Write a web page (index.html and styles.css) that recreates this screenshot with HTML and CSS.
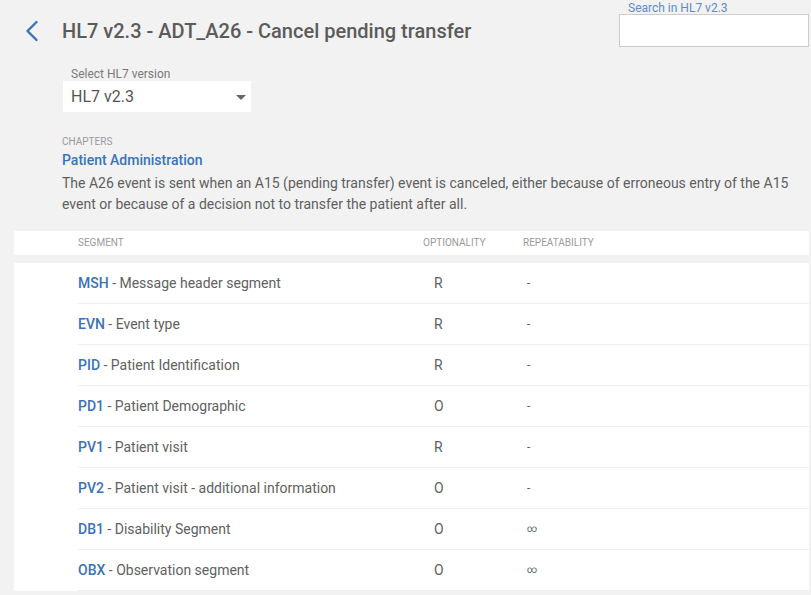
FILE: index.html
```html
<!DOCTYPE html>
<html lang="en">
<head>
<meta charset="utf-8">
<title>HL7 v2.3 - ADT_A26</title>
<link rel="stylesheet" href="styles.css">
</head>
<body>
<header class="header">
  <div class="title-group">
    <a class="back" href="#" aria-label="Back">
      <svg width="14" height="22" viewBox="0 0 14 22"><path d="M11.5 2 L2.5 11 L11.5 20" fill="none" stroke="#3b72b8" stroke-width="2.4" stroke-linecap="round" stroke-linejoin="round"/></svg>
    </a>
    <h1 class="title">HL7 v2.3 - ADT_A26 - Cancel pending transfer</h1>
  </div>
  <div class="search">
    <label class="search-label">Search in HL7 v2.3</label>
    <div class="search-input"></div>
  </div>
</header>

<section class="version">
  <div class="version-label">Select HL7 version</div>
  <div class="select">
    <span class="select-value">HL7 v2.3</span>
    <span class="caret"></span>
  </div>
</section>

<section class="chapter">
  <div class="chapter-kicker">CHAPTERS</div>
  <div class="chapter-name">Patient Administration</div>
  <p class="chapter-desc">The A26 event is sent when an A15 (pending transfer) event is canceled, either because of erroneous entry of the A15 event or because of a decision not to transfer the patient after all.</p>
</section>

<div class="thead">
  <div class="th">SEGMENT</div>
  <div class="th">OPTIONALITY</div>
  <div class="th">REPEATABILITY</div>
</div>

<div class="tbody">
  <div class="row"><div class="seg"><span class="code">MSH</span> - Message header segment</div><div class="opt">R</div><div class="rep">-</div></div>
  <div class="row"><div class="seg"><span class="code">EVN</span> - Event type</div><div class="opt">R</div><div class="rep">-</div></div>
  <div class="row"><div class="seg"><span class="code">PID</span> - Patient Identification</div><div class="opt">R</div><div class="rep">-</div></div>
  <div class="row"><div class="seg"><span class="code">PD1</span> - Patient Demographic</div><div class="opt">O</div><div class="rep">-</div></div>
  <div class="row"><div class="seg"><span class="code">PV1</span> - Patient visit</div><div class="opt">R</div><div class="rep">-</div></div>
  <div class="row"><div class="seg"><span class="code">PV2</span> - Patient visit - additional information</div><div class="opt">O</div><div class="rep">-</div></div>
  <div class="row"><div class="seg"><span class="code">DB1</span> - Disability Segment</div><div class="opt">O</div><div class="rep inf">∞</div></div>
  <div class="row"><div class="seg"><span class="code">OBX</span> - Observation segment</div><div class="opt">O</div><div class="rep inf">∞</div></div>
</div>
</body>
</html>
```

FILE: styles.css
```css
* { box-sizing: border-box; }

html, body {
  margin: 0;
  padding: 0;
  background: #f2f2f2;
  font-family: Roboto, "Liberation Sans", Arial, sans-serif;
  color: #616161;
  overflow: hidden;
}

.header {
  display: flex;
  justify-content: space-between;
  align-items: flex-start;
  padding: 0 2px 0 26px;
}

.title-group {
  display: flex;
  align-items: center;
  margin-top: 19px;
}

.back {
  display: flex;
  width: 14px;
  height: 22px;
  margin-left: -1px;
}

.title {
  margin: 0 0 0 23px;
  font-size: 20px;
  line-height: 24px;
  font-weight: 500;
  color: #5b5b5b;
}

.search {
  width: 190px;
  padding-top: 2px;
}

.search-label {
  display: block;
  padding-left: 9px;
  font-size: 12px;
  line-height: 12px;
  color: #5f8cc6;
}

.search-input {
  height: 33px;
  background: #fff;
  border: 1px solid #cccccc;
}

.version {
  margin: 21px 0 0 63px;
  width: 188px;
}

.version-label {
  padding-left: 8px;
  font-size: 12px;
  line-height: 13px;
  color: #7a7a7a;
}

.select {
  margin-top: 0;
  height: 31px;
  background: #fff;
  display: flex;
  align-items: center;
  justify-content: space-between;
  padding: 0 5px 0 8px;
}

.select-value {
  font-size: 16px;
  line-height: 31px;
  color: #555;
}

.caret {
  width: 0;
  height: 0;
  border-left: 5px solid transparent;
  border-right: 5px solid transparent;
  border-top: 5px solid #666;
  margin-top: 1px;
}

.chapter {
  margin: 24px 2px 0 62px;
}

.chapter-kicker {
  font-size: 10px;
  line-height: 12px;
  color: #9a9a9a;
}

.chapter-name {
  margin-top: 2px;
  font-size: 14px;
  line-height: 21px;
  font-weight: 500;
  color: #3b72b8;
}

.chapter-desc {
  margin: 2px 0 0;
  font-size: 14px;
  line-height: 21px;
  color: #5f5f5f;
}

.thead {
  margin: 16px 2px 0 14px;
  height: 24px;
  background: #fff;
  display: grid;
  grid-template-columns: 345px 100px 1fr;
  padding-left: 64px;
}

.th {
  font-size: 10px;
  line-height: 24px;
  color: #9a9a9a;
}

.tbody {
  margin: 8px 2px 0 14px;
  background: #fff;
  padding-left: 64px;
}

.row {
  display: grid;
  grid-template-columns: 345px 100px 1fr;
  height: 41px;
  border-bottom: 1px solid #eeeeee;
  font-size: 14px;
  line-height: 40px;
  color: #616161;
}

.code {
  font-weight: 500;
  color: #3b72b8;
}

.opt {
  padding-left: 11px;
}

.rep {
  padding-left: 4px;
  font-size: 12px;
}

.rep.inf {
  font-size: 10px;
}
```
